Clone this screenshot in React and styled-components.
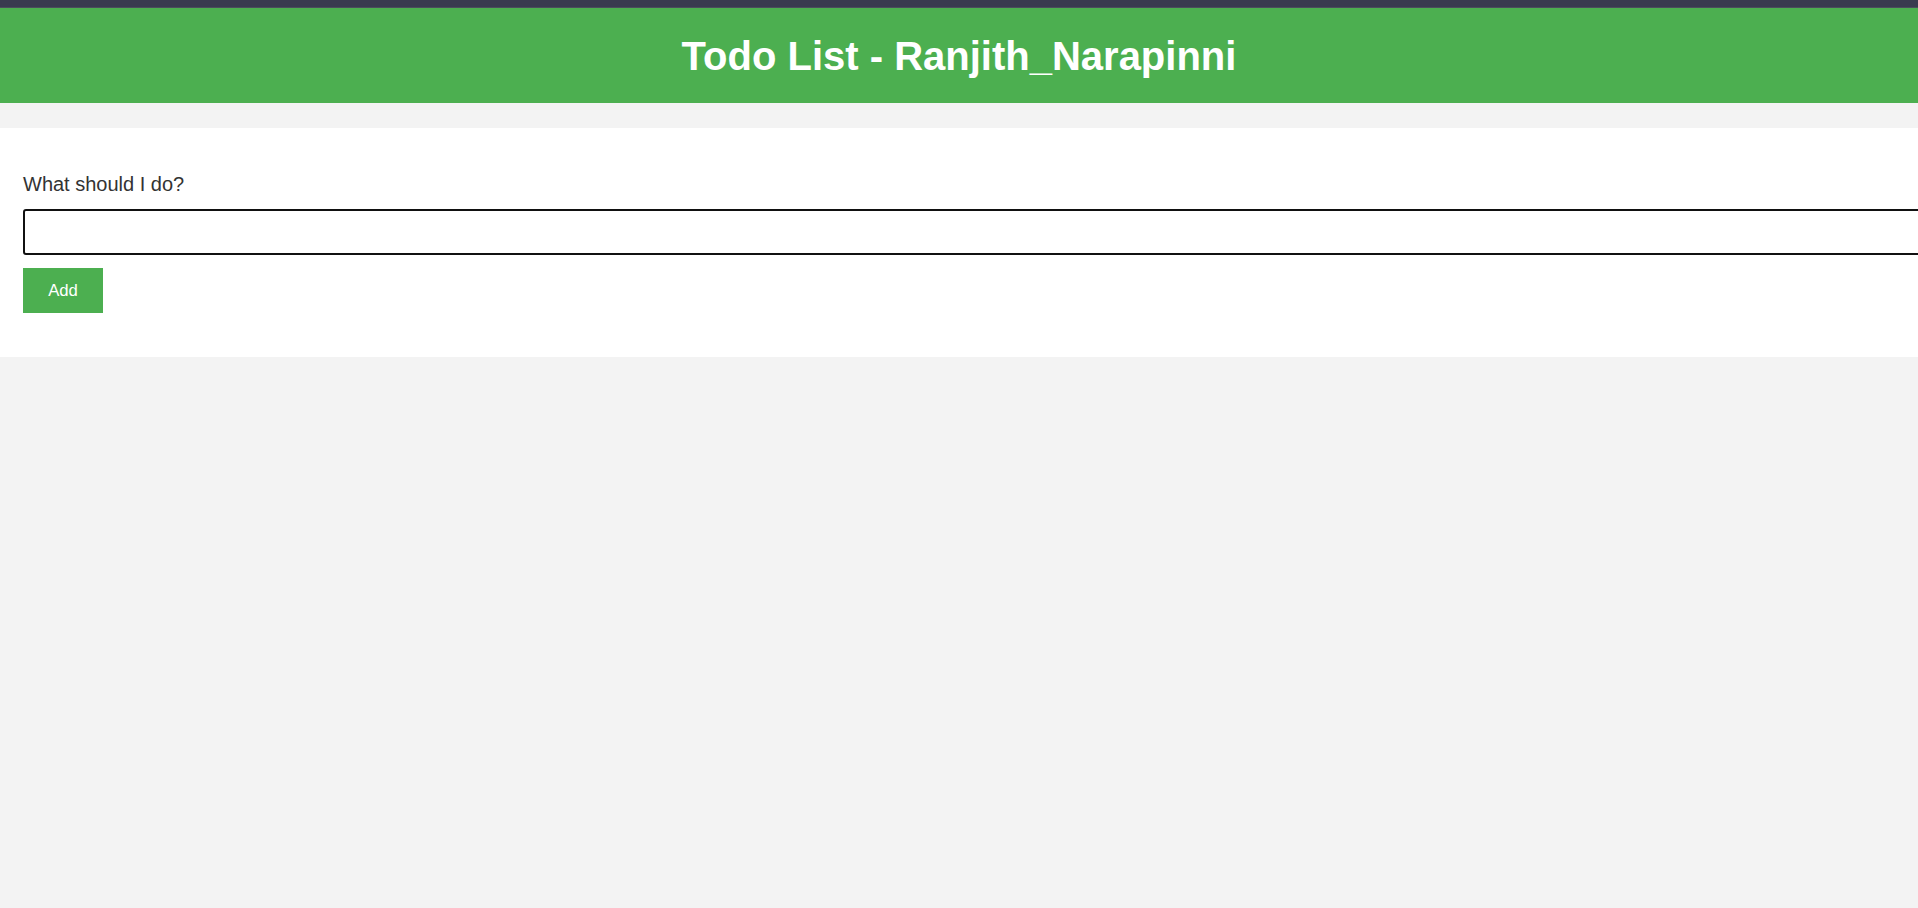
import React, {useState} from 'react';
import styled, {createGlobalStyle} from 'styled-components';

const GlobalStyle = createGlobalStyle`
  html, body {
    margin: 0;
    padding: 0;
    background-color: #f3f3f3;
    font-family: "Liberation Sans", Arial, sans-serif;
  }
  ::-webkit-scrollbar {
    height: 8px;
    background-color: #f1f1f1;
  }
  ::-webkit-scrollbar-track {
    margin: 0 19px 0 23px;
  }
  ::-webkit-scrollbar-thumb {
    background-color: #c1c1c1;
  }
`

const Page = styled.div`
  min-height: 100vh;
  background-color: #f3f3f3;
`
const TopStrip = styled.div`
  height: 7px;
  background-color: #393b4f;
  border-bottom: 1px solid #4b4d5c;
`
const Header = styled.header`
  height: 95px;
  background-color: #4caf50;
  display: flex;
  align-items: center;
  justify-content: center;
`
const Title = styled.h1`
  margin: 0;
  color: #ffffff;
  font-size: 40px;
  font-weight: 700;
  line-height: 1;
`
const Panel = styled.section`
  margin-top: 25px;
  background-color: #ffffff;
  padding: 45px 23px 44px;
`
const Label = styled.label`
  display: block;
  color: #333333;
  font-size: 20px;
  line-height: 23px;
  margin-bottom: 13px;
`
const TodoInput = styled.input`
  display: block;
  width: 100%;
  height: 42px;
  padding: 0 12px;
  border: 2px solid #111111;
  border-radius: 3px;
  font-family: inherit;
  font-size: 20px;
  outline: none;
  background-color: #ffffff;
`
const AddButton = styled.button`
  margin-top: 13px;
  width: 80px;
  height: 45px;
  border: none;
  background-color: #4caf50;
  color: #ffffff;
  font-family: inherit;
  font-size: 16.7px;
  cursor: pointer;
`

const App = () => {
    const [text, setText] = useState('')
    const [todos, setTodos] = useState([])

    function addTodo() {
        if (!text.trim()) return
        setTodos([...todos, text])
        setText('')
    }

    return (
        <Page>
            <GlobalStyle/>
            <TopStrip/>
            <Header>
                <Title>Todo List - Ranjith_Narapinni</Title>
            </Header>
            <Panel>
                <Label htmlFor="todo">What should I do?</Label>
                <TodoInput id="todo" value={text} onChange={e => setText(e.target.value)}/>
                <AddButton onClick={addTodo}>Add</AddButton>
            </Panel>
        </Page>
    );
};

export default App;
